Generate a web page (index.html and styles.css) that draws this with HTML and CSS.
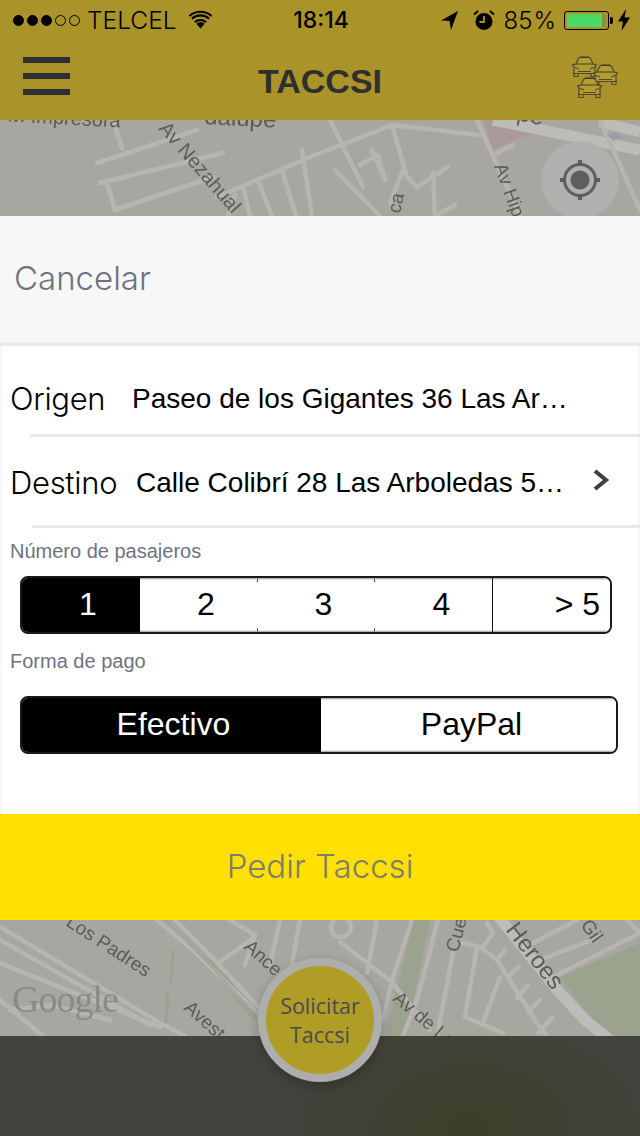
FILE: index.html
```html
<!DOCTYPE html>
<html lang="es">
<head>
<meta charset="utf-8">
<title>Taccsi</title>
<link rel="stylesheet" href="styles.css">
</head>
<body>
<div class="page">
  <header class="header">
    <div class="status">
      <div class="status-left">
        <span class="dot on"></span><span class="dot on"></span><span class="dot on"></span><span class="dot"></span><span class="dot"></span>
        <span class="carrier">TELCEL</span>
        <svg class="wifi" width="25" height="19" viewBox="0 0 26 20"><path d="M13 19.500 8.600 14.400a6.600 6.600 0 0 1 8.800 0Z"/><path d="M6.400 11.900a10 10 0 0 1 13.200 0l-1.500 1.700a7.700 7.700 0 0 0-10.200 0Z"/><path d="M3.200 8.300a14.800 14.800 0 0 1 19.600 0l-1.500 1.700a12.500 12.500 0 0 0-16.600 0Z"/><path d="M.6 5.400a18.600 18.600 0 0 1 24.800 0l-1.500 1.700a16.300 16.300 0 0 0-21.800 0Z"/></svg>
      </div>
      <div class="time">18:14</div>
      <div class="status-right">
        <svg width="20" height="20" viewBox="0 0 20 20"><path d="M18 1 1 10.500l8.500.6L11 20Z"/></svg>
        <svg class="alarm" width="22" height="22" viewBox="0 0 22 22"><circle cx="11" cy="12.500" r="8.500"/><path d="M11 7v6H6.500" class="hand"/><path d="M1 5.500 5 2M21 5.500 17 2" class="bell"/></svg>
        <span class="pct">85<span class="pct-sign">%</span></span>
        <span class="battery"><span class="battery-fill"></span></span><span class="battery-tip"></span>
        <svg width="14" height="22" viewBox="0 0 14 22"><path d="M9 0 1 12.500h5L4.500 22 13 8.500H7.500Z"/></svg>
      </div>
    </div>
    <nav class="nav">
      <div class="burger"><span></span><span></span><span></span></div>
      <h1 class="title">TACCSI</h1>
      <svg class="taxis" width="50" height="46" viewBox="0 0 50 46">
        <defs>
          <g id="car">
            <path class="car-body" d="M3 17h4v3.500H3ZM20 17h4v3.500h-4Z"/>
            <path class="car-body" d="M5 8 7.500 2.500Q8 1.500 10 1.500h7q2 0 2.500 1L22 8l3 .6v1.200l-1 .6V17.500H3V10.400l-1-.6V8.600Z"/>
            <path class="car-line" d="M5 8h17"/>
            <path class="car-roof" d="M9 .5h9V2H9Z"/>
            <path class="car-line" d="M4 11.500 8 13M23 11.500 19 13M7 15.500h13"/>
          </g>
        </defs>
        <use href="#car" x="0" y="0"/>
        <use href="#car" x="21" y="8"/>
        <use href="#car" x="5" y="21"/>
      </svg>
    </nav>
  </header>

  <div class="map map-top">
    <svg class="map-svg" width="640" height="96" viewBox="0 120 640 96">
      <rect x="0" y="120" width="640" height="96" class="land"/>
      <path class="pink" d="M483 120 493 150 533 133 500 120Z"/>
      <path class="road wide" d="M493 120 640 150M600 122 640 132"/>
      <path class="road" d="M97 163 197 130M100 183 223 153M107 183 115 210 213 177M113 120 122 148M217 197 320 153 393 125 480 135M228 216 235 195M250 216 243 186M272 216 258 180M296 216 282 170M312 216 302 150M330 120 363 187M335 170 380 216M360 165 378 155 385 180M372 150 385 180M392 125 407 177 417 187 448 167M403 170 390 203M433 173 435 216 455 205M477 120 520 216M497 153 513 145M600 120 640 210"/>
      <path class="arrow" d="M607 135 615 131V134H622V139H615V142Z"/>
      <text class="label" transform="translate(-2 121) rotate(3)">Av. Impresora</text>
      <text class="label big" transform="translate(204 124) rotate(3)">dalupe</text>
      <text class="label" transform="translate(158 129) rotate(49)">Av Nezahual</text>
      <text class="label big" transform="translate(516 120) rotate(12)">pe</text>
      <text class="label small" transform="translate(494 166) rotate(70)">Av Hip</text>
      <text class="label small" transform="translate(400 214) rotate(-78)">ca</text>
    </svg>
    <div class="locate">
      <svg width="44" height="44" viewBox="0 0 44 44"><circle cx="22" cy="22" r="15.500" class="loc-ring"/><circle cx="22" cy="22" r="9.500" class="loc-dot"/><path class="loc-tick" d="M22 2v6M22 36v6M2 22h6M36 22h6"/></svg>
    </div>
  </div>

  <main class="sheet">
    <div class="cancel">Cancelar</div>
    <div class="row row-origin">
      <span class="row-label">Origen</span>
      <span class="row-value">Paseo de los Gigantes 36 Las Ar…</span>
    </div>
    <div class="row row-dest">
      <span class="row-label">Destino</span>
      <span class="row-value value-dest">Calle Colibrí 28 Las Arboledas 5…</span>
      <svg class="chevron" width="18" height="24" viewBox="0 0 18 24"><path d="M3 3l11 9-11 9"/></svg>
    </div>
    <div class="field-label first">Número de pasajeros</div>
    <div class="seg seg-num">
      <div class="opt on n1">1</div>
      <div class="opt n2">2</div>
      <div class="opt n3">3</div>
      <div class="opt n4">4</div>
      <div class="opt n5">&gt; 5</div>
    </div>
    <div class="field-label second">Forma de pago</div>
    <div class="seg seg-pay">
      <div class="opt on p1">Efectivo</div>
      <div class="opt p2">PayPal</div>
    </div>
    <button class="request">Pedir Taccsi</button>
  </main>

  <div class="map map-bottom">
    <svg class="map-svg" width="640" height="116" viewBox="0 920 640 116">
      <rect x="0" y="920" width="640" height="116" class="land"/>
      <path class="park" d="M560 977 640 943V1036H607L583 1007Z"/>
      <path class="park" d="M197 953 217 963 258 1017 253 1020ZM413 920h17L406 1036H386ZM172 950h3L172 983h-3ZM166 993h4l-3 30h-3Z"/>
      <path class="road" d="M0 927 160 1023 185 1036M0 940 150 1025M0 963 110 1007 160 1027M0 1000 43 1036M10 1010 50 1005 110 1020M157 920 193 950 267 1023M175 920 210 955 280 1030M220 962 253 938M230 920 255 935 245 965M280 920 270 965M300 920 290 975M377 920 367 973M340 942 392 982 430 1030M412 920 393 977 383 1020M438 920 417 1000 403 1036M453 953 437 1036M463 943 480 947 497 960 537 1023 547 1036M477 947 465 1017 503 1033M500 977 483 1023M505 950 497 960M518 967 508 978M528 985 517 998M540 1000 528 1012M552 1018 538 1033M487 923 493 933 483 947M533 943 577 920M540 960 600 937M553 977 640 933M627 920 640 933"/>
      <circle cx="341" cy="927" r="10" class="ring-road"/>
      <path class="road wide" d="M497 915 560 993 585 1020 610 1040"/>
      <path class="road thin-dark" d="M165 920 205 960 270 1030"/>
      <text class="label small" transform="translate(65 925) rotate(33)">Los Padres</text>
      <text class="label small" transform="translate(183 1009) rotate(42)">Avest</text>
      <text class="label small" transform="translate(243 948) rotate(42)">Ance</text>
      <text class="label small" transform="translate(392 1000) rotate(40)">Av de Lo</text>
      <text class="label small" transform="translate(458 953) rotate(-75)">Cue</text>
      <text class="label big" transform="translate(505 930) rotate(52)">Heroes</text>
      <text class="label small" transform="translate(580 925) rotate(55)">Gil</text>
      <text class="google" x="12" y="1012">Google</text>
    </svg>
  </div>

  <footer class="footer"></footer>

  <button class="solicit">Solicitar<br>Taccsi</button>
</div>
</body>
</html>
```

FILE: styles.css
```css
* { box-sizing: border-box; margin: 0; padding: 0; }
html, body { width: 640px; height: 1136px; overflow: hidden; background: #fff; }
.page { position: relative; width: 640px; height: 1136px; display: flex; flex-direction: column; font-family: "Liberation Sans", sans-serif; }

.header { height: 120px; flex: none; background: #aa9328; display: flex; flex-direction: column; }
.status { height: 40px; flex: none; display: grid; grid-template-columns: 1fr auto 1fr; align-items: center; color: #000; padding: 0 9px 0 13px; }
.status-left { display: flex; align-items: center; gap: 3px; }
.dot { width: 11px; height: 11px; border-radius: 50%; border: 1px solid #000; margin-top: 1px; }
.dot.on { background: #000; }
.carrier { font-family: Inter, sans-serif; font-weight: 300; font-size: 24.500px; margin-left: 4px; }
.wifi { margin-left: 8px; margin-top: -1px; }
.time { font-family: Inter, sans-serif; font-size: 23px; font-weight: 500; margin-left: -2px; }
.status-right { display: flex; align-items: center; justify-content: flex-end; }
.status-right svg { flex: none; }
.alarm { margin-left: 13px; }
.hand { fill: none; stroke: #aa9328; stroke-width: 1.800; }
.bell { fill: none; stroke: #000; stroke-width: 2; }
.pct { font-family: Inter, sans-serif; font-weight: 300; font-size: 24px; margin-left: 9px; }
.pct-sign { margin-left: 1px; }
.battery { width: 45px; height: 19px; margin-left: 8px; border: 1.500px solid #000; border-radius: 3px; padding: 2px; display: block; }
.battery-fill { display: block; width: 35px; height: 100%; background: #4cd964; box-shadow: 4px 0 0 #8c8e40; }
.battery-tip { width: 3px; height: 7px; background: #000; margin-left: 1px; margin-right: 4px; border-radius: 0 2px 2px 0; }

.nav { flex: 1; display: flex; align-items: center; justify-content: space-between; padding: 0 19px 0 23px; position: relative; }
.burger { width: 47px; height: 38px; display: flex; flex-direction: column; justify-content: space-between; margin-top: -8px; }
.burger span { height: 6px; background: #2f2f2f; }
.title { position: absolute; left: 0; right: 0; top: 21px; text-align: center; font-size: 34px; line-height: 40px; font-weight: 700; color: #2f2f2f; }
.taxis { margin-top: -2px; }
.car-body { fill: #b39c30; stroke: #4b4732; stroke-width: 1.200; }
.car-line { fill: none; stroke: #4b4732; stroke-width: 1.100; }
.car-roof { fill: #3a3a30; }

.map { flex: none; position: relative; overflow: hidden; }
.map-top { height: 96px; }
.map-bottom { height: 116px; }
.map-svg { display: block; filter: blur(.5px); }
.land { fill: #a8a6a0; }
.road { fill: none; stroke: #b6b5b1; stroke-width: 4.500; stroke-linecap: round; stroke-linejoin: round; }
.road.wide { stroke: #bdbcba; stroke-width: 11; stroke-linecap: butt; }
.road.thin-dark { stroke: #a09f9b; stroke-width: 1.500; }
.ring-road { fill: #a8a6a0; stroke: #b6b5b1; stroke-width: 4.500; }
.pink { fill: #aa9b98; }
.park { fill: #9ba38f; }
.arrow { fill: #9a9fa5; }
.label { font-family: "Liberation Sans", sans-serif; font-size: 20px; fill: #5c5b57; }
.label.small { font-size: 19px; }
.label.big { font-size: 24px; }
.google { font-family: "Liberation Serif", serif; font-size: 38px; fill: #8a8986; letter-spacing: -1px; }

.locate { position: absolute; left: 541px; top: 21px; width: 78px; height: 78px; border-radius: 50%; background: #b1b0ae; display: flex; align-items: center; justify-content: center; }
.loc-ring { fill: none; stroke: #5e5e5e; stroke-width: 3; }
.loc-dot { fill: #5e5e5e; }
.loc-tick { stroke: #5e5e5e; stroke-width: 4; fill: none; }

.sheet { height: 704px; flex: none; background: #fff; border-left: 2px solid #f7f7f7; border-right: 2px solid #f7f7f7; display: flex; flex-direction: column; }
.cancel { height: 130px; flex: none; background: #f7f7f7; border-bottom: 4px solid #e9e9e9; margin: 0 -2px; padding: 42px 0 0 14px; font-family: Inter, sans-serif; font-weight: 300; font-size: 33px; line-height: 40px; color: #6d7380; }
.row { display: flex; align-items: center; flex: none; position: relative; }
.row::after { content: ""; position: absolute; bottom: 0; right: -2px; height: 3px; background: #e9e9e9; }
.row-origin { height: 91px; padding: 14px 0 0 8px; }
.row-origin::after { left: 28px; }
.row-dest { height: 91px; padding: 0 0 0 8px; }
.row-dest::after { left: 30px; }
.row-label { font-family: Inter, sans-serif; font-weight: 300; font-size: 31px; letter-spacing: -.3px; color: #000; width: 114px; flex: none; }
.row-dest .row-label { width: 118px; }
.row-value { font-size: 28px; color: #000; white-space: nowrap; margin-left: 8px; }
.chevron { margin-left: 28px; margin-top: -6px; fill: none; stroke: #3f3f3f; stroke-width: 4; }
.field-label { font-size: 20px; line-height: 24px; color: #6d7380; padding-left: 8px; }
.field-label.first { margin-top: 11px; }
.field-label.second { margin-top: 15px; }
.seg { display: flex; margin-left: 18px; height: 58px; border: 2px solid #1a1a1a; border-radius: 8px; overflow: hidden; flex: none; }
.seg-num { width: 592px; margin-top: 13px; }
.seg-pay { width: 598px; margin-top: 23px; }
.opt { display: flex; align-items: center; justify-content: center; padding-bottom: 2px; background-color: #fff; color: #000; font-size: 32px; box-shadow: inset 0 3px 2px -2px #999, inset 0 -3px 2px -2px #999; }
.opt.on { background-color: #000; color: #fff; box-shadow: none; }
.n1 { width: 118px; padding-left: 14px; }
.n2, .n3 { padding-left: 14px; background: linear-gradient(#444, #444) right top / 1px 4px no-repeat, linear-gradient(#444, #444) right bottom / 1px 4px no-repeat, #fff; }
.n2 { width: 118px; }
.n3 { width: 117px; }
.n4 { width: 118px; padding-left: 16px; border-right: 1px solid #111; }
.n5 { flex: 1; justify-content: flex-end; padding-right: 10px; }
.p1 { width: 299px; padding-left: 4px; }
.p2 { flex: 1; padding-left: 6px; }
.request { margin: 60px -2px 0; height: 106px; flex: none; border: 0; padding-bottom: 2px; background: #ffe000; color: #7c7c72; font-family: Inter, sans-serif; font-weight: 300; font-size: 33px; }

.footer { flex: 1; background: radial-gradient(ellipse 260px 160px at 470px 90px, #3b3f29, #454340 85%), #44423f; }

.solicit { position: absolute; left: 258px; top: 958px; width: 124px; height: 124px; border-radius: 50%; border: 8px solid #aeaeae; background: #b09d26; color: #4a4a50; font-family: "Open Sans", sans-serif; font-size: 21.500px; line-height: 29px; box-shadow: 0 4px 12px rgba(0,0,0,.25); }
```
